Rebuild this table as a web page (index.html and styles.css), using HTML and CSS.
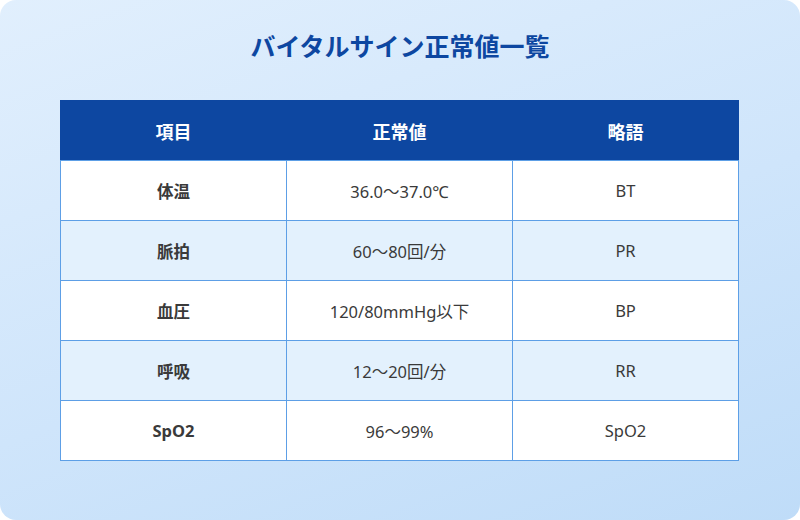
FILE: index.html
```html
<!DOCTYPE html>
<html lang="ja">
<head>
<meta charset="utf-8">
<link rel="stylesheet" href="styles.css">
</head>
<body>
<div class="card">
  <h1 class="title">バイタルサイン正常値一覧</h1>
  <table class="vitals">
    <thead>
      <tr><th>項目</th><th>正常値</th><th>略語</th></tr>
    </thead>
    <tbody>
      <tr><td class="name">体温</td><td>36.0～37.0℃</td><td>BT</td></tr>
      <tr class="alt"><td class="name">脈拍</td><td>60～80回/分</td><td>PR</td></tr>
      <tr><td class="name">血圧</td><td>120/80mmHg以下</td><td>BP</td></tr>
      <tr class="alt"><td class="name">呼吸</td><td>12～20回/分</td><td>RR</td></tr>
      <tr><td class="name">SpO2</td><td>96～99%</td><td>SpO2</td></tr>
    </tbody>
  </table>
</div>
</body>
</html>
```
FILE: styles.css
```css
html, body {
  margin: 0;
  padding: 0;
  background: #ffffff;
}
.card {
  width: 800px;
  height: 520px;
  box-sizing: border-box;
  border-radius: 16px;
  background: linear-gradient(160deg, #e1effd 0%, #cfe5fb 55%, #bfdcf8 100%);
  padding-top: 26px;
  font-family: "Noto Sans", "Noto Sans CJK JP", sans-serif;
  overflow: hidden;
}
.title {
  margin: 0;
  text-align: center;
  font-size: 25px;
  line-height: 38px;
  font-weight: 700;
  color: #0d47a1;
  font-family: "Noto Sans CJK JP", sans-serif;
}
.vitals {
  margin: 36px 0 0 60px;
  width: 679px;
  border-collapse: collapse;
  table-layout: fixed;
  font-size: 16.5px;
  color: #3a3a3a;
}
.vitals th {
  background: #0d47a1;
  color: #ffffff;
  font-weight: 700;
  font-size: 18px;
  height: 59px;
  padding: 0;
  text-align: center;
  border: 1px solid #0d47a1;
  border-bottom: 1px solid #5d9fe6;
  font-family: "Noto Sans CJK JP", sans-serif;
}
.vitals td {
  height: 59px;
  padding: 0;
  text-align: center;
  border: 1px solid #5d9fe6;
  background: #ffffff;
}
.vitals tr.alt td {
  background: #e3f1fd;
}
.vitals td.name {
  font-weight: 700;
}
```
